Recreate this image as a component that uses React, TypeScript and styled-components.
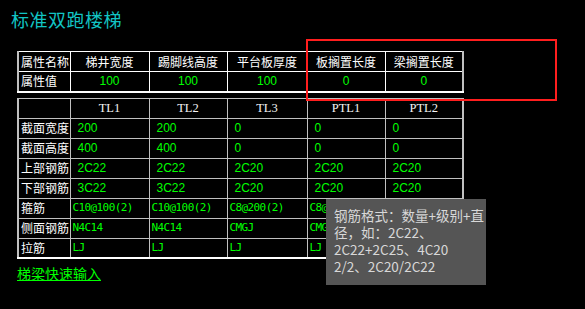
import React from "react";
import styled, { createGlobalStyle } from "styled-components";

const GlobalStyle = createGlobalStyle`
  html, body { margin: 0; padding: 0; background: #000; }
  body { font-family: "Noto Sans CJK SC", "Noto Sans", sans-serif; }
`;

const Page = styled.div`
  position: relative;
  width: 585px;
  height: 309px;
  background: #000;
  overflow: hidden;
`;

const Title = styled.h1`
  margin: 0;
  padding: 7px 0 0 11px;
  font-family: "Noto Sans CJK SC", sans-serif;
  font-weight: 400;
  font-size: 18px;
  line-height: 24px;
  letter-spacing: 0.5px;
  color: #12c4c4;
`;

const Grid = styled.table<{ $line: string; $top: number }>`
  margin: ${(p) => p.$top}px 0 0 17px;
  width: 445px;
  border-collapse: collapse;
  table-layout: fixed;
  border-left: 2px solid #c0c0c0;
  border-right: 2px solid #c0c0c0;
  border-top: 1px solid ${(p) => p.$line};
  border-bottom: 2px solid #fff;
  td {
    border: 1px solid ${(p) => p.$line};
  }
`;

const Row = styled.tr`
  height: 20px;
`;

const Label = styled.td`
  padding: 0 0 0 2px;
  font-family: "Noto Sans CJK SC", sans-serif;
  font-size: 12px;
  line-height: 14px;
  color: #fff;
  white-space: nowrap;
  overflow: hidden;
`;

const Head = styled.td`
  padding: 0;
  text-align: center;
  font-family: "Noto Sans CJK SC", sans-serif;
  font-size: 12px;
  line-height: 14px;
  color: #fff;
  white-space: nowrap;
`;

const SerifHead = styled.td`
  padding: 0;
  text-align: center;
  font-family: "Liberation Serif", serif;
  font-weight: 400;
  font-size: 12.5px;
  line-height: 14px;
  color: #f4f4f4;
`;

const Value = styled.td<{ $align?: "center" | "left"; $mono?: boolean }>`
  padding: 0 0 0 ${(p) => (p.$align === "center" ? 0 : p.$mono ? 2 : 7)}px;
  text-align: ${(p) => p.$align ?? "left"};
  font-family: ${(p) => (p.$mono ? '"DejaVu Sans Mono", monospace' : '"Liberation Sans", sans-serif')};
  font-size: ${(p) => (p.$mono ? 11 : 12)}px;
  letter-spacing: ${(p) => (p.$mono ? "-0.6px" : "0")};
  line-height: 14px;
  color: #00ff00;
  white-space: nowrap;
  overflow: hidden;
`;

const QuickLink = styled.a`
  display: inline-block;
  margin: 4px 0 0 17px;
  font-family: "Noto Sans CJK SC", sans-serif;
  font-size: 14px;
  line-height: 20px;
  color: #00ff00;
  text-decoration: underline;
  cursor: pointer;
`;

const Callout = styled.div`
  position: absolute;
  left: 306px;
  top: 39px;
  width: 251px;
  height: 62px;
  box-sizing: border-box;
  border: 2px solid #ff1e1e;
  pointer-events: none;
`;

const Tip = styled.div`
  position: absolute;
  left: 326px;
  top: 199px;
  width: 160px;
  height: 86px;
  box-sizing: border-box;
  padding: 8px 0 0 8px;
  background: #555555;
  color: #d8d8d8;
  font-family: "Noto Sans CJK SC", sans-serif;
  font-size: 13.5px;
  line-height: 17px;
`;

const TipLine = styled.span`
  display: block;
  white-space: nowrap;
`;

const colWidths = [52, 79, 78, 80, 78, 78];

const Cols = () => (
  <colgroup>
    {colWidths.map((w, i) => (
      <col key={i} style={{ width: w }} />
    ))}
  </colgroup>
);

const props = [
  { name: "梯井宽度", value: "100" },
  { name: "踢脚线高度", value: "100" },
  { name: "平台板厚度", value: "100" },
  { name: "板搁置长度", value: "0" },
  { name: "梁搁置长度", value: "0" },
];

const beams = ["TL1", "TL2", "TL3", "PTL1", "PTL2"];

const beamRows: { label: string; mono: boolean; values: string[] }[] = [
  { label: "截面宽度", mono: false, values: ["200", "200", "0", "0", "0"] },
  { label: "截面高度", mono: false, values: ["400", "400", "0", "0", "0"] },
  { label: "上部钢筋", mono: false, values: ["2C22", "2C22", "2C20", "2C20", "2C20"] },
  { label: "下部钢筋", mono: false, values: ["3C22", "3C22", "2C20", "2C20", "2C20"] },
  { label: "箍筋", mono: true, values: ["C10@100(2)", "C10@100(2)", "C8@200(2)", "C8@200(2)", "C8@200(2)"] },
  { label: "侧面钢筋", mono: true, values: ["N4C14", "N4C14", "CMGJ", "CMGJ", "CMGJ"] },
  { label: "拉筋", mono: true, values: ["LJ", "LJ", "LJ", "LJ", "LJ"] },
];

export default function App() {
  return (
    <Page>
      <GlobalStyle />
      <Title>标准双跑楼梯</Title>
      <Grid $line="#ffffff" $top={20}>
        <Cols />
        <tbody>
          <Row>
            <Label>属性名称</Label>
            {props.map((p) => (
              <Head key={p.name}>{p.name}</Head>
            ))}
          </Row>
          <Row>
            <Label>属性值</Label>
            {props.map((p) => (
              <Value key={p.name} $align="center">
                {p.value}
              </Value>
            ))}
          </Row>
        </tbody>
      </Grid>
      <Grid $line="#c0c0c0" $top={5}>
        <Cols />
        <tbody>
          <Row>
            <Label />
            {beams.map((b) => (
              <SerifHead key={b}>{b}</SerifHead>
            ))}
          </Row>
          {beamRows.map((r) => (
            <Row key={r.label}>
              <Label>{r.label}</Label>
              {r.values.map((v, i) => (
                <Value key={i} $mono={r.mono}>
                  {v}
                </Value>
              ))}
            </Row>
          ))}
        </tbody>
      </Grid>
      <QuickLink>梯梁快速输入</QuickLink>
      <Callout />
      <Tip>
        <TipLine>钢筋格式：数量+级别+直</TipLine>
        <TipLine>径，如：2C22、</TipLine>
        <TipLine>2C22+2C25、4C20</TipLine>
        <TipLine>2/2、2C20/2C22</TipLine>
      </Tip>
    </Page>
  );
}
